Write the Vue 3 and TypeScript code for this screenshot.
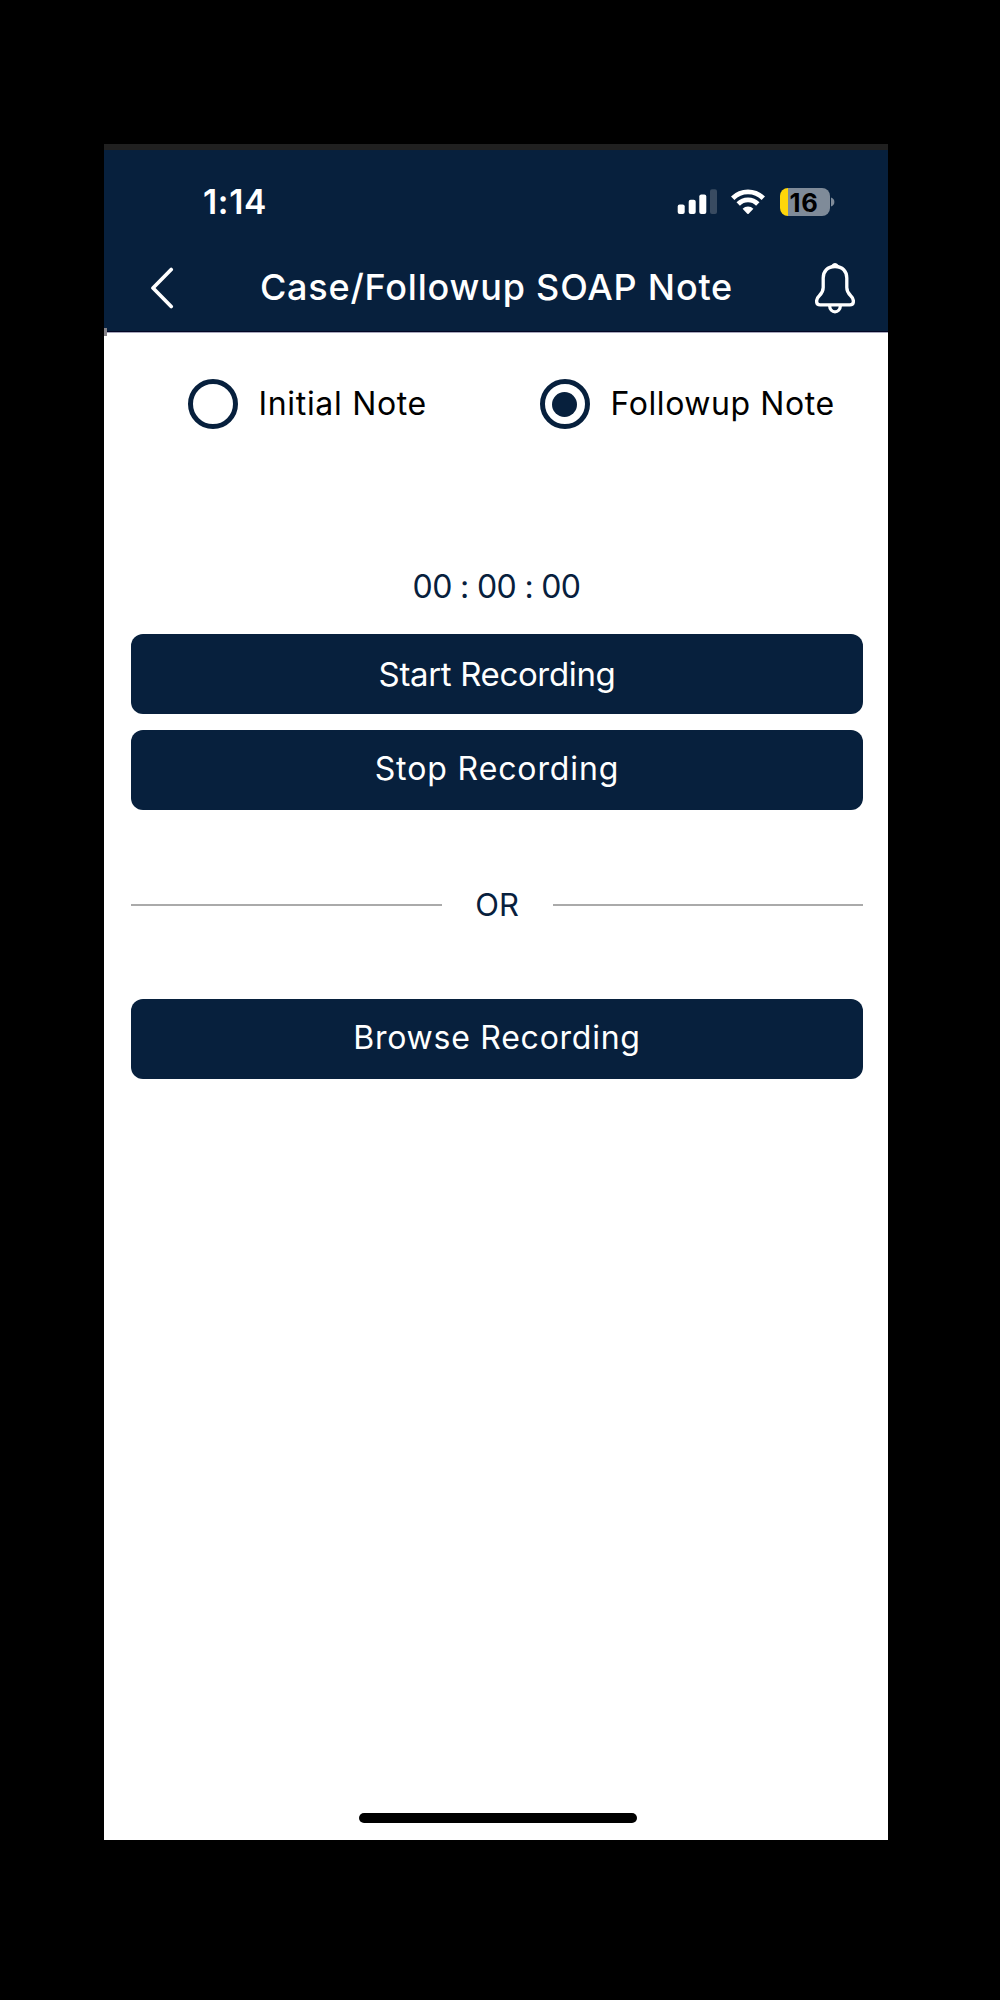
<script setup lang="ts">
import { ref } from 'vue'

type NoteType = 'initial' | 'followup'

const noteType = ref<NoteType>('followup')
const options: { value: NoteType; label: string }[] = [
  { value: 'initial', label: 'Initial Note' },
  { value: 'followup', label: 'Followup Note' },
]
const elapsed = ref('00 : 00 : 00')
</script>

<template>
  <div class="stage">
    <div class="phone">
      <header class="header">
        <div class="status">
          <span class="time">1:14</span>
          <div class="indicators">
            <svg class="signal" width="40" height="26" viewBox="0 0 40 26">
              <rect x="0.7" y="15.5" width="7" height="9.5" rx="2" fill="#fff" />
              <rect x="11.7" y="10.8" width="7" height="14.2" rx="2" fill="#fff" />
              <rect x="22.3" y="5.5" width="7" height="19.5" rx="2" fill="#fff" />
              <rect x="33" y="0.3" width="7" height="24.7" rx="2" fill="#394b61" />
            </svg>
            <svg class="wifi" width="34" height="26" viewBox="0 0 34 26">
              <g fill="none" stroke="#fff" stroke-width="4.8">
                <path d="M1.7 9.2a21.8 21.8 0 0 1 30.6 0" />
                <path d="M7.2 15a13.8 13.8 0 0 1 19.6 0" />
              </g>
              <path d="M11.6 19.7a7.6 7.6 0 0 1 10.8 0L17.7 24.7q-.7.7-1.4 0z" fill="#fff" />
            </svg>
            <div class="battery"><span>16</span></div>
            <svg class="nub" width="4" height="10" viewBox="0 0 4 10">
              <path d="M0 .5C4.5 2 4.5 8 0 9.5z" fill="#7f8b99" />
            </svg>
          </div>
        </div>
        <nav class="nav">
          <svg width="24" height="42" viewBox="0 0 24 42">
            <path d="M21.2 2.500 3 21l18.200 18.500" fill="none" stroke="#fff" stroke-width="3.700" stroke-linecap="round" stroke-linejoin="round" />
          </svg>
          <h1>Case/Followup SOAP Note</h1>
          <svg width="40" height="52" viewBox="0 0 40 52">
            <g fill="none" stroke="#fff" stroke-width="3.300" stroke-linejoin="round">
              <path d="M20 4.500C12.500 4.500 8.200 9.300 8.200 16v9.500c0 3.600-1.200 5.600-3.700 8-2 1.900-2.900 3.600-2.900 5.700 0 2.300 1.300 3.700 3.500 3.700h29.800c2.200 0 3.500-1.400 3.500-3.700 0-2.100-.9-3.800-2.900-5.700-2.500-2.400-3.700-4.400-3.700-8V16C31.800 9.300 27.500 4.500 20 4.500z" />
              <path d="M14.600 43.500c.3 8.400 10.500 8.400 10.800 0" />
            </g>
            <path d="M13.500 5C16.500 4 17.300.9 20 .9s3.500 3.100 6.500 4.100z" fill="#fff" />
          </svg>
        </nav>
      </header>

      <main class="content">
        <div class="options" role="radiogroup">
          <label v-for="o in options" :key="o.value" class="option" @click="noteType = o.value">
            <span class="radio"><i v-if="noteType === o.value" /></span>
            <span class="label" :class="o.value">{{ o.label }}</span>
          </label>
        </div>

        <div class="timer">{{ elapsed }}</div>
        <button class="btn start">Start Recording</button>
        <button class="btn stop">Stop Recording</button>
        <div class="divider"><span>OR</span></div>
        <button class="btn browse">Browse Recording</button>
      </main>
      <div class="home" />
      <i class="notch" />
    </div>
  </div>
</template>

<style>
body {
  background: #000;
}
</style>

<style scoped>
.stage {
  box-sizing: border-box;
  height: 2000px;
  padding: 144px 112px 160px 104px;
  background: #000;
  font-family: Inter, "Liberation Sans", sans-serif;
}
.phone {
  position: relative;
  display: flex;
  flex-direction: column;
  height: 1696px;
  background: #fff;
}
.header {
  box-sizing: border-box;
  height: 189px;
  border-top: 6px solid #202020;
  border-bottom: 1px solid #a8a8bd;
  background: #07203d;
  box-shadow: inset 0 -1px #020624;
}
.status {
  display: flex;
  justify-content: space-between;
  align-items: center;
  height: 104px;
  padding: 0 53px 0 99px;
  color: #fff;
}
.time {
  font-size: 33.5px;
  font-weight: 600;
  letter-spacing: 0.7px;
}
.indicators {
  display: flex;
  align-items: center;
}
.wifi {
  margin-left: 14px;
}
.battery {
  display: flex;
  align-items: center;
  box-sizing: border-box;
  width: 50px;
  height: 28px;
  margin-left: 15px;
  padding-left: 10px;
  border-radius: 8px;
  background: linear-gradient(90deg, #ffd60a 8px, #7f8b99 8px);
  color: #000;
  font-size: 25.5px;
  font-weight: 700;
  letter-spacing: 0.8px;
}
.nub {
  margin-left: 1.5px;
}
.nav {
  display: flex;
  align-items: center;
  justify-content: space-between;
  height: 68px;
  padding: 0 33px 0 46px;
}
h1 {
  margin: 0 0 2px 4px;
  color: #fff;
  font-size: 36px;
  font-weight: 500;
  line-height: 50px;
  letter-spacing: 0.8px;
  white-space: nowrap;
}
.content {
  display: flex;
  flex-direction: column;
  flex: 1;
  padding: 46px 25px 0 27px;
}
.options {
  display: grid;
  grid-template-columns: 352px auto;
  justify-content: start;
  margin-left: 56.5px;
}
.option {
  display: flex;
  align-items: center;
  height: 50px;
}
.radio {
  display: flex;
  align-items: center;
  justify-content: center;
  box-sizing: border-box;
  width: 50px;
  height: 50px;
  border: 5px solid #07203d;
  border-radius: 50%;
}
.radio i {
  width: 25px;
  height: 25px;
  border-radius: 50%;
  background: #07203d;
}
.label {
  margin: 0 0 2px 21px;
  color: #000;
  font-size: 32px;
  letter-spacing: 0.68px;
  white-space: nowrap;
}
.label.followup {
  letter-spacing: 0.58px;
}
.timer {
  height: 40px;
  margin: 138px 1px 0 0;
  color: #07203d;
  font-size: 32px;
  line-height: 40px;
  letter-spacing: -0.65px;
  text-align: center;
}
.btn {
  box-sizing: border-box;
  height: 80px;
  margin: 0;
  border: 0;
  border-radius: 12px;
  background: #07203d;
  color: #fff;
  font-family: inherit;
  font-size: 32px;
  line-height: 78px;
  text-align: center;
}
.start {
  margin-top: 27px;
  padding: 0;
  font-size: 33px;
  line-height: 80px;
  letter-spacing: -0.35px;
}
.stop {
  margin-top: 16px;
  padding: 0 0 3px;
  letter-spacing: 0.9px;
}
.divider {
  display: flex;
  align-items: center;
  height: 40px;
  margin-top: 75px;
  color: #07203d;
  font-size: 31px;
  line-height: 40px;
}
.divider::before,
.divider::after {
  content: "";
  flex: 1;
  height: 2px;
  background: #aaa;
}
.divider span {
  width: 111px;
  padding-bottom: 1px;
  text-align: center;
}
.browse {
  margin-top: 74px;
  padding: 0 0 3px;
  letter-spacing: 0.75px;
}
.home {
  align-self: center;
  width: 278px;
  height: 10px;
  margin: 0 0 17px 3px;
  border-radius: 5px;
  background: #000;
}
.notch {
  position: absolute;
  left: 0;
  top: 184px;
  width: 3px;
  height: 8px;
  background: #86848a;
}
</style>
